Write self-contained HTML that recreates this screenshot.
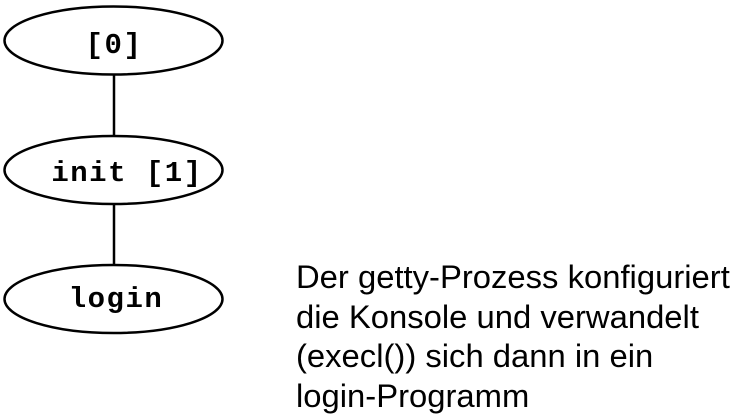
<!DOCTYPE html>
<html><head><meta charset="utf-8"><style>
html,body{margin:0;padding:0;background:#fff;width:736px;height:419px;overflow:hidden}
svg{position:absolute;left:0;top:0}
.m{font-family:"Liberation Mono",monospace;font-weight:bold;font-size:29px;letter-spacing:1.5px}
.t{position:absolute;left:296px;top:257px;font-family:"Liberation Sans",sans-serif;font-size:32.8px;line-height:39.5px;color:#000;white-space:nowrap}
</style></head><body>
<svg width="736" height="419">
<g fill="none" stroke="#000" stroke-width="2.5">
<ellipse cx="113.5" cy="40.5" rx="109" ry="34"/>
<ellipse cx="113.5" cy="170" rx="109" ry="34"/>
<ellipse cx="113.5" cy="299" rx="109" ry="34"/>
<line x1="114" y1="75" x2="114" y2="136"/>
<line x1="114" y1="204" x2="114" y2="265"/>
</g>
<text class="m" x="114" y="53" text-anchor="middle">[0]</text>
<text class="m" x="127" y="181" text-anchor="middle">init [1]</text>
<text class="m" x="116" y="307" text-anchor="middle">login</text>
</svg>
<div class="t">Der getty-Prozess konfiguriert<br>die Konsole und verwandelt<br>(execl()) sich dann in ein<br>login-Programm</div>
</body></html>
